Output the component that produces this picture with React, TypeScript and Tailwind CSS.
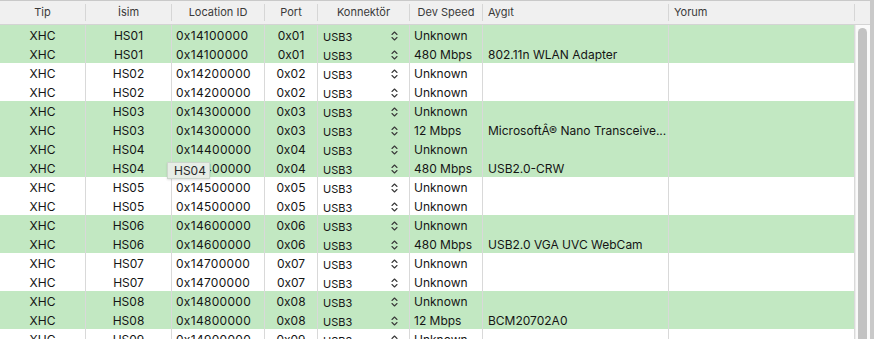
import React from "react";

type Row = { n: string; loc: string; port: string; speed: string; dev: string; g: boolean };

const rows: Row[] = [
  { n: "HS01", loc: "0x14100000", port: "0x01", speed: "Unknown", dev: "", g: true },
  { n: "HS01", loc: "0x14100000", port: "0x01", speed: "480 Mbps", dev: "802.11n WLAN Adapter", g: true },
  { n: "HS02", loc: "0x14200000", port: "0x02", speed: "Unknown", dev: "", g: false },
  { n: "HS02", loc: "0x14200000", port: "0x02", speed: "Unknown", dev: "", g: false },
  { n: "HS03", loc: "0x14300000", port: "0x03", speed: "Unknown", dev: "", g: true },
  { n: "HS03", loc: "0x14300000", port: "0x03", speed: "12 Mbps", dev: "MicrosoftÂ® Nano Transceive...", g: true },
  { n: "HS04", loc: "0x14400000", port: "0x04", speed: "Unknown", dev: "", g: true },
  { n: "HS04", loc: "0x14400000", port: "0x04", speed: "480 Mbps", dev: "USB2.0-CRW", g: true },
  { n: "HS05", loc: "0x14500000", port: "0x05", speed: "Unknown", dev: "", g: false },
  { n: "HS05", loc: "0x14500000", port: "0x05", speed: "Unknown", dev: "", g: false },
  { n: "HS06", loc: "0x14600000", port: "0x06", speed: "Unknown", dev: "", g: true },
  { n: "HS06", loc: "0x14600000", port: "0x06", speed: "480 Mbps", dev: "USB2.0 VGA UVC WebCam", g: true },
  { n: "HS07", loc: "0x14700000", port: "0x07", speed: "Unknown", dev: "", g: false },
  { n: "HS07", loc: "0x14700000", port: "0x07", speed: "Unknown", dev: "", g: false },
  { n: "HS08", loc: "0x14800000", port: "0x08", speed: "Unknown", dev: "", g: true },
  { n: "HS08", loc: "0x14800000", port: "0x08", speed: "12 Mbps", dev: "BCM20702A0", g: true },
  { n: "HS09", loc: "0x14900000", port: "0x09", speed: "Unknown", dev: "", g: false },
];

const cols = "grid grid-cols-[86px_86px_93px_53px_92px_73px_186px_186px]";

function Chevrons() {
  return (
    <svg width="7" height="10" viewBox="0 0 7 10" fill="none" stroke="#3a3a3a" strokeWidth="1.1" strokeLinecap="round" strokeLinejoin="round">
      <path d="M1 3.5 L3.5 1 L6 3.5" />
      <path d="M1 6.5 L3.5 9 L6 6.5" />
    </svg>
  );
}

export default function App() {
  return (
    <div
      className="relative w-[874px] h-[339px] overflow-hidden bg-[#c9c9c9] text-[#151515]"
      style={{ fontFamily: "Inter, 'Liberation Sans', sans-serif" }}
    >
      <div className="w-[870px] h-[339px] mt-px flex flex-col bg-white">
        {/* header */}
        <div className="flex h-[24px] shrink-0 bg-[#f0f0f0] border-b border-[#d4d4d4] text-[11px] text-[#3a3a3a]">
          <div className={cols}>
            <div className="border-r border-[#d6d6d6] flex items-center justify-center my-[3px]">Tip</div>
            <div className="border-r border-[#d6d6d6] flex items-center justify-center my-[3px]">İsim</div>
            <div className="border-r border-[#d6d6d6] flex items-center justify-center my-[3px]">Location ID</div>
            <div className="border-r border-[#d6d6d6] flex items-center justify-center my-[3px]">Port</div>
            <div className="border-r border-[#d6d6d6] flex items-center justify-center my-[3px]">Konnektör</div>
            <div className="border-r border-[#d6d6d6] flex items-center justify-center my-[3px]">Dev Speed</div>
            <div className="border-r border-[#d6d6d6] flex items-center pl-[5px] my-[3px]">Aygıt</div>
            <div className="border-r border-[#d6d6d6] flex items-center pl-[5px] my-[3px]">Yorum</div>
          </div>
          <div className="flex-1" />
        </div>
        {/* body */}
        <div className="flex flex-1 min-h-0">
          <div className="flex flex-col">
            {rows.map((r, i) => (
              <div key={i} className={`${cols} h-[19px] shrink-0 text-[12px] ${r.g ? "bg-[#c2e8c2]" : "bg-white"}`}>
                <div className="border-r border-[#d9d9d9] flex items-center justify-center pt-[2px]">XHC</div>
                <div className="border-r border-[#d9d9d9] flex items-center justify-center pt-[2px]">{r.n}</div>
                <div className="border-r border-[#d9d9d9] flex items-center pl-[4px] pt-[2px] tracking-[0.3px]">{r.loc}</div>
                <div className="border-r border-[#d9d9d9] flex items-center justify-center pt-[2px]">{r.port}</div>
                <div className="border-r border-[#d9d9d9] flex items-center pl-[5px] pr-[11px] justify-between pt-[2px]">
                  <span className="text-[11px] pt-[2px]">USB3</span>
                  <Chevrons />
                </div>
                <div className="border-r border-[#d9d9d9] flex items-center pl-[4px] pt-[2px] whitespace-nowrap">{r.speed}</div>
                <div className="border-r border-[#d9d9d9] flex items-center pl-[5px] pt-[2px] whitespace-nowrap overflow-hidden">{r.dev}</div>
                <div className="border-r border-[#d9d9d9]" />
              </div>
            ))}
          </div>
          {/* scrollbar */}
          <div className="flex-1 bg-[#fafafa] border-l border-[#ececec] pt-[3px] pl-[2px]">
            <div className="w-[9px] h-[400px] rounded-full bg-[#c2c2c2]" />
          </div>
        </div>
      </div>
      {/* tooltip */}
      <div className="absolute left-[167px] top-[162px] w-[43px] h-[17px] bg-[#e7ede6] border border-[#cdd6cc] shadow-[0_1px_2px_rgba(0,0,0,0.12)] text-[12px] text-[#2a2a2a] flex items-center pl-[6px]">
        HS04
      </div>
    </div>
  );
}
